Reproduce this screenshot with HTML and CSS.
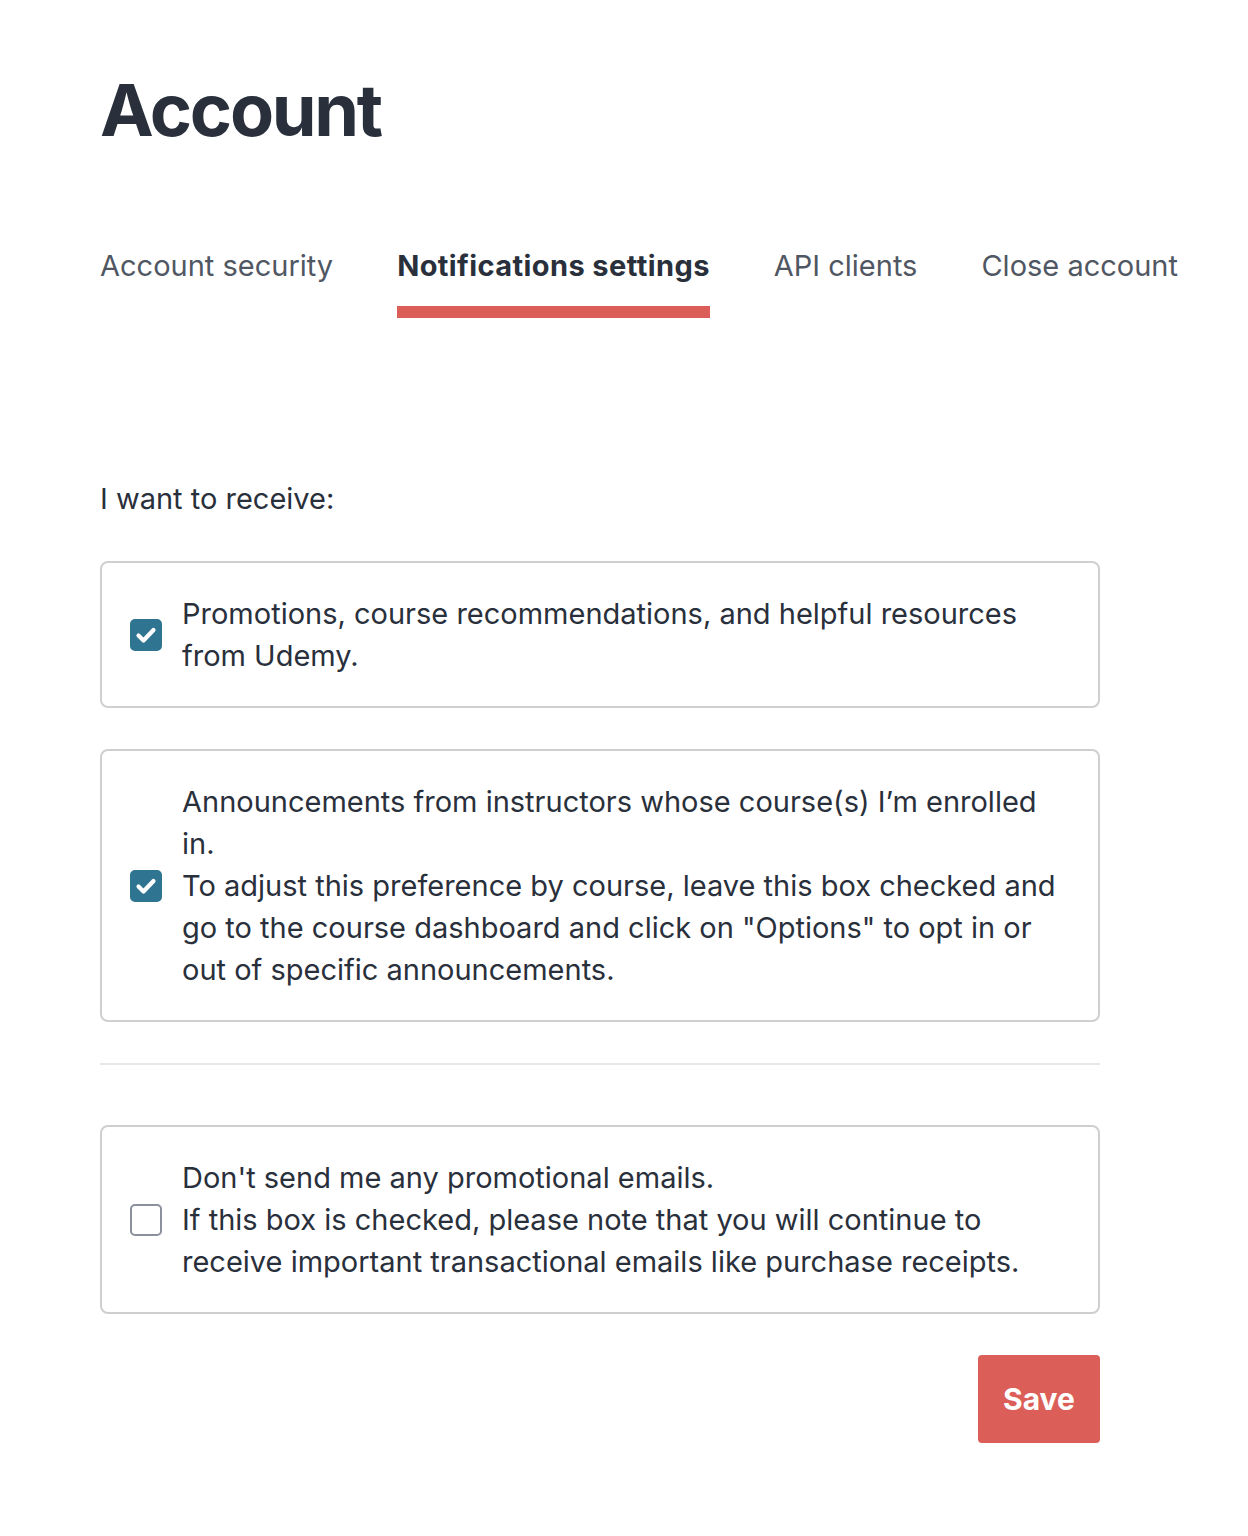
FILE: index.html
```html
<!DOCTYPE html>
<html lang="en">
<head>
<meta charset="utf-8">
<title>Account</title>
<link rel="stylesheet" href="styles.css">
</head>
<body>
<main class="page">
  <h1 class="title">Account</h1>
  <nav class="tabs">
    <a class="tab">Account security</a>
    <a class="tab active">Notifications settings</a>
    <a class="tab">API clients</a>
    <a class="tab">Close account</a>
  </nav>
  <form class="form">
    <p class="intro">I want to receive:</p>
    <label class="option">
      <span class="box checked"><svg viewBox="0 0 32 32" width="32" height="32"><path d="M8.5 16.5l5 5 10-10.5" fill="none" stroke="#fff" stroke-width="4.2" stroke-linecap="round" stroke-linejoin="round"/></svg></span>
      <span class="text">Promotions, course recommendations, and helpful resources from Udemy.</span>
    </label>
    <label class="option">
      <span class="box checked"><svg viewBox="0 0 32 32" width="32" height="32"><path d="M8.5 16.5l5 5 10-10.5" fill="none" stroke="#fff" stroke-width="4.2" stroke-linecap="round" stroke-linejoin="round"/></svg></span>
      <span class="text">Announcements from instructors whose course(s) I’m enrolled in.<br>To adjust this preference by course, leave this box checked and go to the course dashboard and click on "Options" to opt in or out of specific announcements.</span>
    </label>
    <hr class="sep">
    <label class="option">
      <span class="box"></span>
      <span class="text">Don't send me any promotional emails.<br>If this box is checked, please note that you will continue to receive important transactional emails like purchase receipts.</span>
    </label>
    <div class="actions">
      <button type="button" class="save">Save</button>
    </div>
  </form>
</main>
</body>
</html>
```

FILE: styles.css
```css
* { box-sizing: border-box; }
html, body { margin: 0; background: #fff; }
body {
  font-family: Inter, "Noto Sans", sans-serif;
  color: #29303b;
}
.page {
  padding: 62px 0 80px 100px;
}
.title {
  margin: 0;
  font-size: 72px;
  line-height: 96px;
  font-weight: 700;
  letter-spacing: -2.3px;
  color: #29303b;
}
.tabs {
  display: flex;
  gap: 64px;
  margin-top: 88px;
}
.tab {
  font-size: 29px;
  line-height: 40px;
  color: #505763;
  padding-bottom: 20px;
  border-bottom: 12px solid transparent;
}
.tab.active {
  font-weight: 700;
  letter-spacing: 0.4px;
  color: #29303b;
  border-bottom-color: #dc5e58;
}
.form {
  width: 1000px;
  margin-top: 160px;
}
.intro {
  margin: 0 0 41px;
  font-size: 29px;
  line-height: 42px;
}
.option {
  display: flex;
  align-items: center;
  gap: 20px;
  border: 2px solid #cfcfcf;
  border-radius: 8px;
  padding: 30px 28px 29px;
  margin-bottom: 41px;
  font-size: 29px;
  line-height: 42px;
}
.box {
  flex: 0 0 32px;
  width: 32px;
  height: 32px;
  border: 2px solid #8a919c;
  border-radius: 5px;
  display: flex;
}
.box.checked {
  background: #2f7591;
  border-color: #2f7591;
}
.box.checked svg { margin: -2px; }
.text { flex: 1; }
.sep {
  border: 0;
  border-top: 2px solid #e8e8e8;
  margin: 2px 0 60px;
}
.actions {
  display: flex;
  justify-content: flex-end;
  margin-top: 0;
}
.save {
  width: 122px;
  height: 88px;
  border: 0;
  border-radius: 4px;
  background: #dc5e58;
  color: #fff;
  font-family: inherit;
  font-size: 30px;
  font-weight: 700;
}
```
